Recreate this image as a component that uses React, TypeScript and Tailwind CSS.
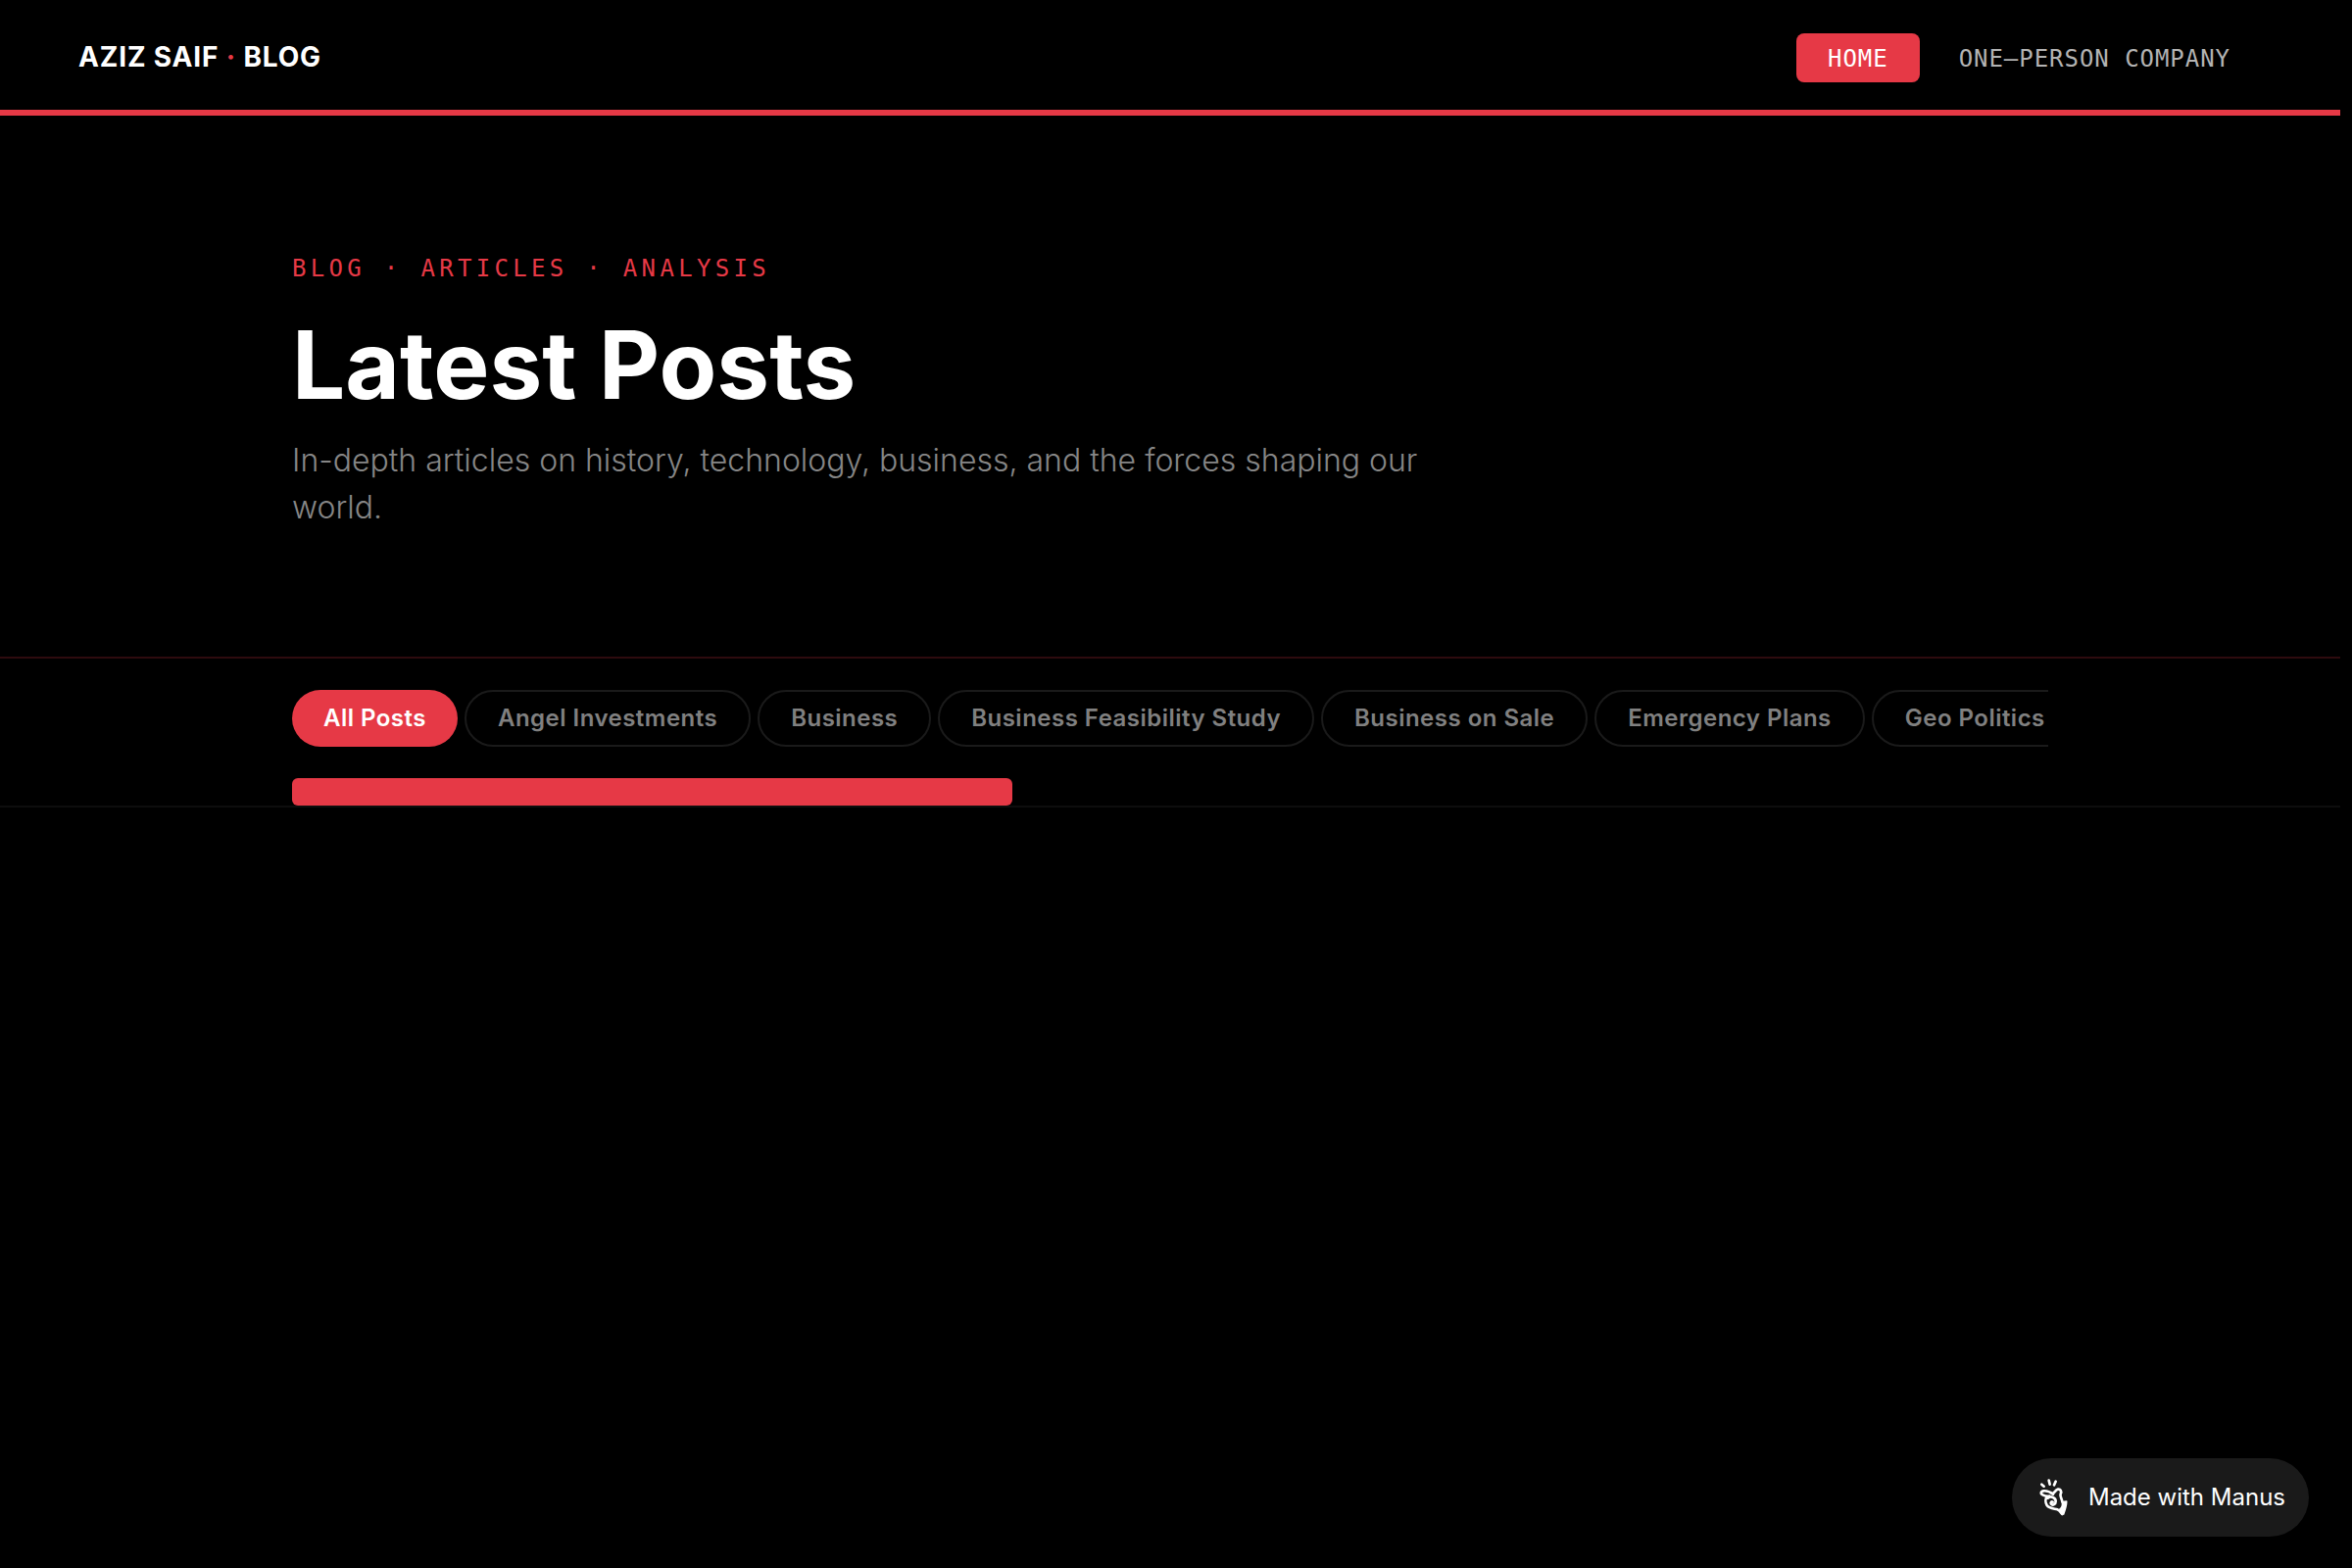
const navLinks = [
    { label: 'Home', active: true },
    { label: 'One–Person Company', active: false },
];

const categories = [
    'All Posts',
    'Angel Investments',
    'Business',
    'Business Feasibility Study',
    'Business on Sale',
    'Emergency Plans',
    'Geo Politics',
];

function HandIcon() {
    return (
        <svg viewBox="38 26 90 114" className="w-[30px] h-[38px]" fill="none" stroke="white" strokeWidth="8" strokeLinecap="round" strokeLinejoin="round" aria-hidden="true">
            {/* Snap rays */}
            <path d="M45 43l7 6M67 31l3 12M88 34l-5 11" strokeWidth="8" />
            {/* Fingers and palm */}
            <path d="M80 73C72 67 62 62 51 63C42 64 41 72 48 75C54 78 61 80 69 79" />
            <path d="M77 71C84 72 86 60 95 58C103 57 107 65 103 72C100 80 107 86 108 96" />
            <path d="M61 82C56 88 56 99 61 107C68 117 82 117 93 120C99 122 103 128 108 134" />
            <path d="M64 85C74 77 88 84 88 95C88 104 79 109 74 103C71 99 75 95 79 97" />
            <path d="M108 97L121 95C121 109 117 120 112 134L107 134L99 121C107 116 110 107 108 97Z" fill="white" strokeWidth="5" />
        </svg>
    );
}

export default function App() {
    return (
        <div className="min-h-screen bg-black text-white pr-3 font-['Inter','Liberation_Sans',sans-serif]">
            {/* Header */}
            <header className="flex items-center justify-between px-20 h-[118px] border-b-6 border-[#e63946]">
                <a href="#" className="pt-1 text-[28px] leading-10 font-bold tracking-[0.03em] uppercase">
                    Aziz Saif <span className="text-[#e63946]">·</span> Blog
                </a>
                <nav className="flex gap-2 pt-1.5 font-['DejaVu_Sans_Mono',monospace]">
                    {navLinks.map((link) => (
                        <a
                            key={link.label}
                            href="#"
                            className={`px-8 pt-0.5 rounded-lg text-2xl leading-12 tracking-[0.04em] uppercase whitespace-nowrap ${link.active
                                ? 'bg-[#e63946] text-white'
                                : 'text-[#b3b3b3]'}`}
                        >
                            {link.label}
                        </a>
                    ))}
                </nav>
            </header>

            {/* Hero */}
            <section className="border-b-2 border-[#2e0b0e]">
                <div className="max-w-[1920px] mx-auto px-16 pt-32 pb-32">
                    <p className="font-['DejaVu_Sans_Mono',monospace] text-2xl leading-[56px] tracking-[0.18em] uppercase text-[#e63946]">
                        Blog · Articles · Analysis
                    </p>
                    <h1 className="mt-4 text-[96px] leading-[108px] font-bold">Latest Posts</h1>
                    <p className="mt-5 max-w-[1200px] text-[32px] leading-12 font-light text-[#868686]">
                        In-depth articles on history, technology, business, and the forces shaping our world.
                    </p>
                </div>
            </section>

            {/* Category filter */}
            <div className="border-b-2 border-[#0d0d0d]">
                <div className="max-w-[1920px] mx-auto px-16 pt-8">
                    <div className="flex gap-[7px] pb-8 overflow-hidden">
                        {categories.map((name, i) => (
                            <button
                                key={name}
                                type="button"
                                className={`shrink-0 h-[58px] px-8 rounded-full text-2xl font-semibold tracking-[0.02em] whitespace-nowrap cursor-pointer ${i === 0
                                    ? 'bg-[#e63946] text-white'
                                    : 'border-2 border-[#1a1a1a] text-[#808080]'}`}
                            >
                                {name}
                            </button>
                        ))}
                    </div>
                    {/* Scroll position of the filter row */}
                    <div className="h-7 w-[41%] rounded-md bg-[#e63946]" />
                </div>
            </div>

            <a href="#" className="fixed right-11 bottom-8 h-20 pl-7 pr-6 flex items-center gap-5 rounded-full bg-[#1a1a1a] text-2xl">
                <HandIcon />
                Made with Manus
            </a>
        </div>
    );
}
